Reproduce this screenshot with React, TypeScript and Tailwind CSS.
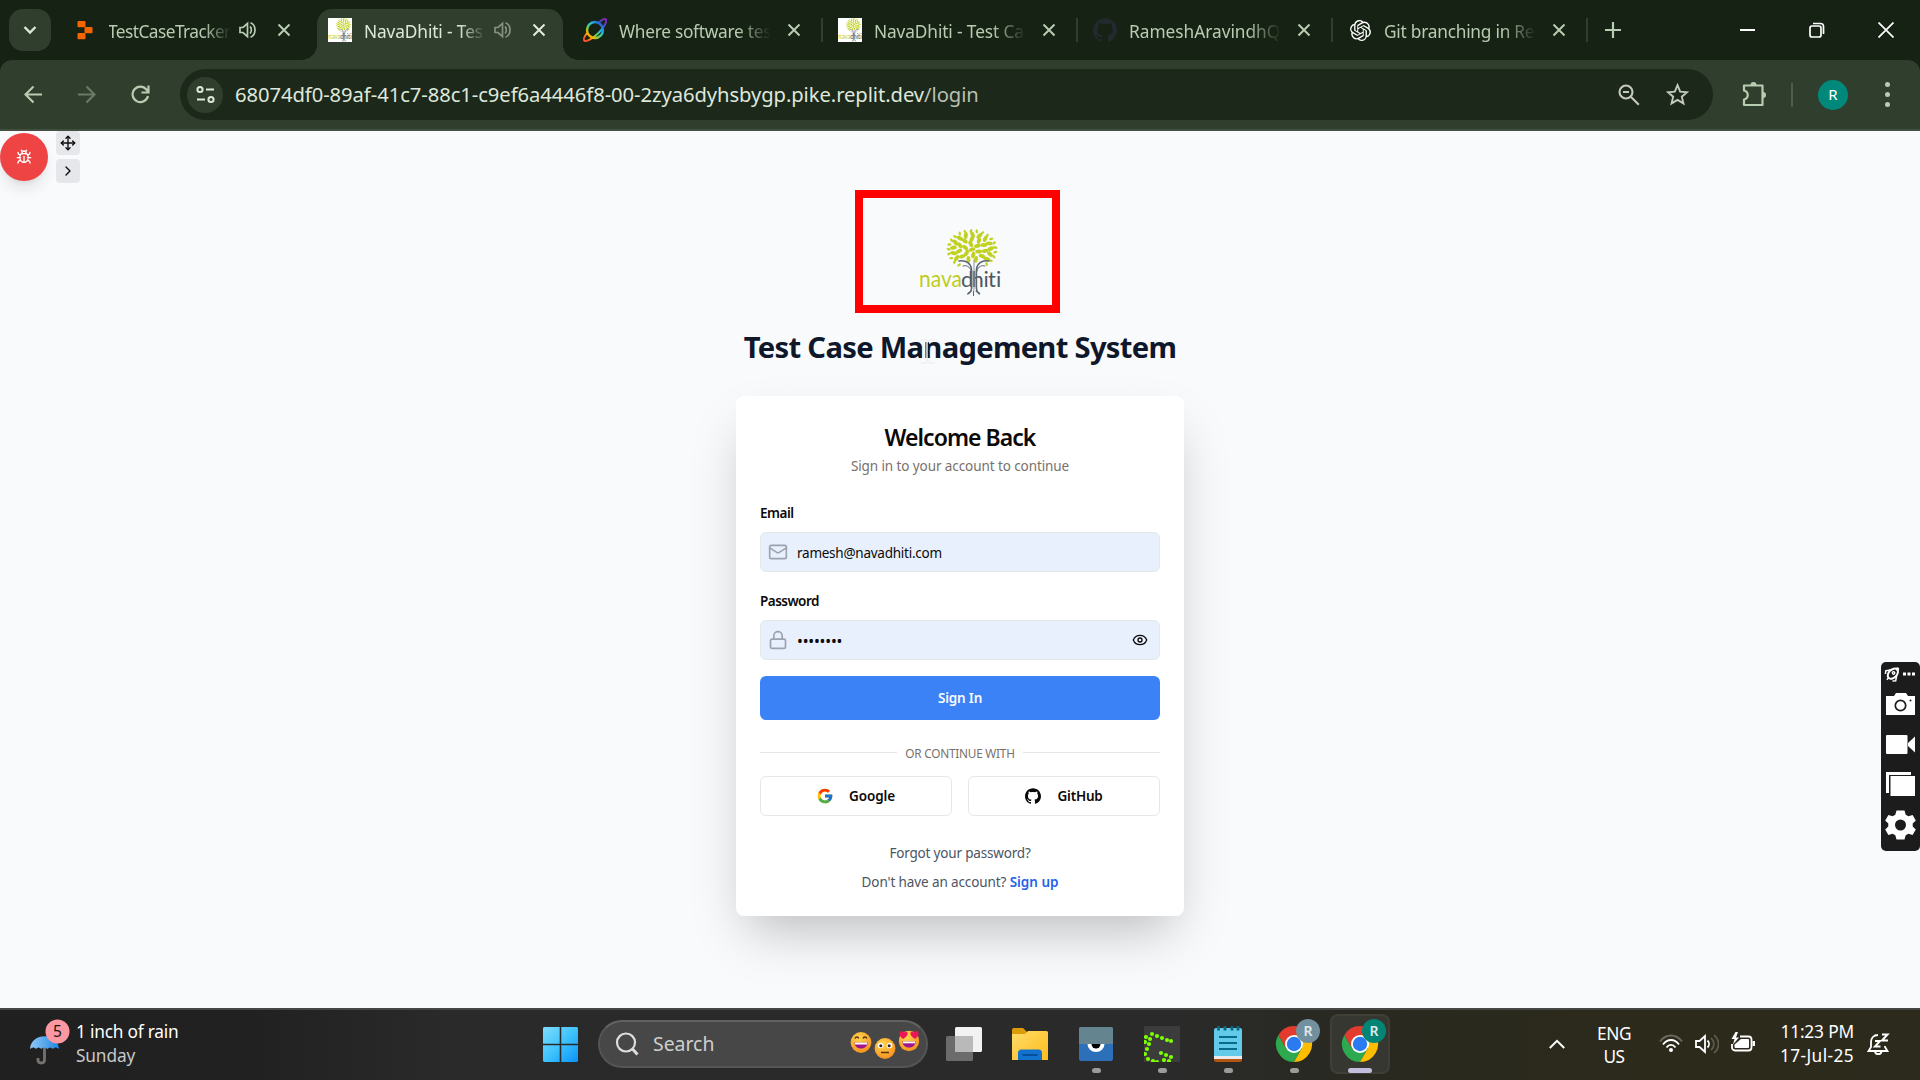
import type { ReactNode } from "react";
import { Bug, ChevronRight, Eye, Lock, Mail, Move } from "lucide-react";
import { FcGoogle } from "react-icons/fc";
import { SiGithub, SiOpenai } from "react-icons/si";

const leaves = [
  { count: 1, r: 0 },
  { count: 6, r: 0.3 },
  { count: 11, r: 0.56 },
  { count: 17, r: 0.8 },
  { count: 25, r: 1 },
].flatMap(({ count, r }, ring) =>
  Array.from({ length: count }, (_, i) => {
    const a = (i / count) * Math.PI * 2 + ring * 0.35;
    return {
      x: 972 + Math.cos(a) * 23.5 * r,
      y: 249.5 + Math.sin(a) * 18.5 * r,
      rot: (a * 180) / Math.PI + (i % 2 ? 25 : -20),
      size: r > 0.9 ? 2.1 : 3.4,
    };
  }).filter((l) => !(Math.abs(l.x - 972) < 11 && l.y > 260)),
);

function TreeLogo({ className, viewBox, stretch }: { className: string; viewBox: string; stretch?: boolean }) {
  return (
    <svg className={className} viewBox={viewBox} preserveAspectRatio={stretch ? "none" : "xMidYMid meet"}>
      {leaves.map((l, i) => (
        <ellipse key={i} cx={l.x} cy={l.y} rx={l.size} ry={l.size * 0.58} fill="#c1d121" transform={`rotate(${l.rot} ${l.x} ${l.y})`} />
      ))}
      <text x="919" y="287.3" fontFamily="Lato, sans-serif" fontSize="22.5" fill="#bccd1f" textLength="43" lengthAdjust="spacingAndGlyphs">nava</text>
      <text x="961 971.500 983.500 988 996" y="287.3" fontFamily="Lato, sans-serif" fontSize="22" fill="#4b5863">dhiti</text>
      <g fill="none" stroke="#5a6672" strokeWidth="1.6" strokeLinecap="round">
        <path d="M959 261c7-1 12.500 2 12.600 10v17c0 4-1 4-3 5.500M989 261c-7-1-12.500 2-12.600 10v17c0 4 1 4 3 5.500" />
        <path d="M963 266c3-1 7 0 8 5M985 266c-3-1-7 0-8 5" strokeWidth="1" />
        <path d="M974 260v30" stroke="#8b949c" strokeWidth="1" />
        <path d="M971 291l-3.500 3M976 291l3.500 3M973.500 291v4.500" strokeWidth="1.100" />
      </g>
    </svg>
  );
}

const NavaFavicon = () => (
  <div className="size-6 bg-white">
    <TreeLogo className="size-6" viewBox="918 229 84 68" stretch />
  </div>
);

const PlanetIcon = () => (
  <svg className="size-6" viewBox="0 0 24 24" fill="none">
    <defs>
      <linearGradient id="rainbow" x1="3" y1="22" x2="21" y2="2" gradientUnits="userSpaceOnUse">
        <stop offset="0" stopColor="#ff4d2e" />
        <stop offset=".22" stopColor="#ffb300" />
        <stop offset=".4" stopColor="#5fd35f" />
        <stop offset=".62" stopColor="#21b8e8" />
        <stop offset=".8" stopColor="#2b62d9" />
        <stop offset="1" stopColor="#7a2bb5" />
      </linearGradient>
    </defs>
    <circle cx="12" cy="12" r="8" stroke="url(#rainbow)" strokeWidth="2.400" />
    <path d="M15.500 5C19 1.300 22 .3 22.900 1.400c1.500 1.900-2 8.300-7.400 13.600S3.200 24 1.400 22.600C.2 21.500 1 19 4 15" stroke="url(#rainbow)" strokeWidth="2" />
  </svg>
);

const ReplitIcon = () => (
  <svg className="size-6" viewBox="0 0 24 24" fill="#f56600">
    <rect x="4.500" y="3" width="8" height="6.200" rx="1" />
    <rect x="11.500" y="9" width="8" height="6.200" rx="1" />
    <rect x="4.500" y="15" width="8" height="6.200" rx="1" />
  </svg>
);

const Speaker = ({ className }: { className: string }) => (
  <svg className={className} viewBox="0 0 18 18" fill="none" stroke="currentColor" strokeWidth="1.700">
    <path d="M1 6.500v5h3l4.500 4V2.500l-4.500 4z" />
    <path d="M11 5.500c1.800 1.500 1.800 5.500 0 7M11.500 1.800c6 2.200 6 12.200 0 14.400" />
  </svg>
);

const Cross = ({ className }: { className: string }) => (
  <svg className={className} viewBox="0 0 14 14" stroke="currentColor" strokeWidth="2">
    <path d="M1.500 1.500l11 11M12.500 1.500l-11 11" />
  </svg>
);

function Tab({ icon, title, active, audio, divider }: { icon: ReactNode; title: ReactNode; active?: boolean; audio?: boolean; divider?: boolean }) {
  return (
    <div className="relative flex h-[60px] w-[255px] shrink-0 items-center pl-[15px]">
      {active && (
        <div className="absolute top-[9px] right-[5px] bottom-0 left-1 rounded-t-[15px] bg-[#303e2d]">
          <div className="absolute bottom-0 -left-[15px] size-[15px] bg-[radial-gradient(circle_at_0_0,transparent_14.5px,#303e2d_15px)]" />
          <div className="absolute -right-[15px] bottom-0 size-[15px] bg-[radial-gradient(circle_at_100%_0,transparent_14.5px,#303e2d_15px)]" />
        </div>
      )}
      <div className="relative flex w-[36px] shrink-0">{icon}</div>
      <div
        className={`relative mt-[3px] shrink-0 text-[17.3px] leading-6 whitespace-nowrap [mask-image:linear-gradient(to_right,black_78%,transparent)] ${audio ? "w-[122px]" : "w-[152px]"} ${active ? "text-[#dde8d8]" : "text-[#b8ccb1]"}`}
      >
        {title}
      </div>
      {audio && <Speaker className={`relative ml-[8px] size-[18px] ${active ? "text-[#869081]" : "text-[#b8ccb1]"}`} />}
      <div className={`relative ${audio ? "ml-[20px]" : "ml-[16px]"}`}>
        <Cross className={`size-[14px] ${active ? "text-[#e3ecdf]" : "text-[#b8ccb1]"}`} />
      </div>
      {divider && <div className="absolute top-[18px] right-0 h-6 w-[2px] bg-[#303e2d]" />}
    </div>
  );
}

function BrowserChrome() {
  return (
    <header className="bg-[#162214] text-[#b8ccb1]">
      <div className="flex h-[60px] items-center">
        <div className="ml-[9px] flex size-[42px] items-center justify-center rounded-[14px] bg-[#303e2d]">
          <svg className="size-[14px]" viewBox="0 0 14 14" fill="none" stroke="#dde8d8" strokeWidth="2.400">
            <path d="M1.500 4l5.500 5.500L12.500 4" />
          </svg>
        </div>
        <div className="ml-[7px] flex">
          <Tab icon={<ReplitIcon />} title={<span className="-ml-px tracking-[-0.55px]">TestCaseTracker</span>} audio />
          <Tab icon={<NavaFavicon />} title={<span className="tracking-[-0.12px]">NavaDhiti - Tes</span>} audio active />
          <Tab icon={<PlanetIcon />} title={<span className="tracking-[-0.27px]">Where software tes</span>} divider />
          <Tab icon={<NavaFavicon />} title={<span className="tracking-[-0.12px]">NavaDhiti - Test Ca</span>} divider />
          <Tab icon={<SiGithub className="size-6 text-[#24292f]" />} title={<span className="tracking-[-0.02px]">RameshAravindhQ</span>} divider />
          <Tab icon={<SiOpenai className="size-[21px] translate-x-[2px] text-white" />} title={<span className="tracking-[-0.24px]">Git branching in Re</span>} divider />
        </div>
        <svg className="ml-[17px] size-4" viewBox="0 0 16 16" stroke="#b8ccb1" strokeWidth="2.200">
          <path d="M8 0v16M0 8h16" />
        </svg>
        <div className="ml-auto flex items-center gap-[53px] pr-[26px]">
          <svg className="size-4" viewBox="0 0 16 16" stroke="#fff" strokeWidth="2">
            <path d="M0 8h15" />
          </svg>
          <svg className="size-4" viewBox="0 0 16 16" fill="none" stroke="#fff" strokeWidth="1.700">
            <rect x="1" y="4" width="11" height="11" rx="2" />
            <path d="M4 1.500h7.500a3 3 0 0 1 3 3V12" />
          </svg>
          <svg className="size-4" viewBox="0 0 16 16" stroke="#fff" strokeWidth="1.700">
            <path d="M.5.5l15 15M15.500.5l-15 15" />
          </svg>
        </div>
      </div>

      <div className="flex h-[71px] items-center rounded-t-[12px] border-b-2 border-[#424e3f] bg-[#303e2d]">
        <div className="ml-6 flex h-full items-center gap-[34px]">
          <svg className="size-[19px]" viewBox="0 0 19 19" fill="none" stroke="#b8ccb1" strokeWidth="2.200">
            <path d="M18 9.500H2M9.500 1.500l-8 8 8 8" />
          </svg>
          <svg className="size-[19px]" viewBox="0 0 19 19" fill="none" stroke="#6b7a66" strokeWidth="2.200">
            <path d="M1 9.500h16M9.500 1.500l8 8-8 8" />
          </svg>
          <svg className="ml-px size-[19px]" viewBox="0 0 19 19" fill="none" stroke="#b8ccb1" strokeWidth="2.200">
            <path d="M17 11a7.800 7.800 0 1 1-1.500-6.500L17 6.500M17.500.5v7h-7" />
          </svg>
        </div>
        <div className="ml-[30px] flex h-[51px] w-[1533px] items-center rounded-full bg-[#1c281a] pr-[24px] pl-[7px]">
          <div className="flex size-9 items-center justify-center rounded-full bg-[#303e2d]">
            <svg className="size-[19px]" viewBox="0 0 19 19" fill="none" stroke="#dde8d8" strokeWidth="2">
              <circle cx="4" cy="4.500" r="2.600" />
              <path d="M10 4.500h8M1 14.500h8" />
              <circle cx="15" cy="14.500" r="2.600" />
            </svg>
          </div>
          <div className="mb-[2px] ml-[12px] text-[20.2px] leading-7 tracking-[-0.06px] whitespace-nowrap text-[#dfe7dc]">
            68074df0-89af-41c7-88c1-c9ef6a4446f8-00-2zya6dyhsbygp.pike.replit.dev<span className="text-[#b9bfb4]">/login</span>
          </div>
          <div className="ml-auto flex items-center gap-[26px]">
            <svg className="size-[22px]" viewBox="0 0 22 22" fill="none" stroke="#c4c9c0" strokeWidth="2.100">
              <circle cx="8" cy="8" r="6.500" />
              <path d="M5 8h6M12.800 12.800l8 8" />
            </svg>
            <svg className="size-[23px]" viewBox="0 0 24 24" fill="none" stroke="#c4c9c0" strokeWidth="2">
              <path d="M12 2.300l2.800 6.700 7.200.6-5.500 4.700 1.700 7-6.200-3.700-6.200 3.700 1.700-7L2 9.600 9.200 9z" />
            </svg>
          </div>
        </div>
        <svg className="mb-px ml-[28px] size-[26px]" viewBox="0 0 26 26" fill="none" stroke="#b8ccb1" strokeWidth="2.200">
          <path d="M3 4.500h18.500v19.500H3v-5.500c5-1.500 5-7.500 0-9z" strokeLinejoin="round" />
          <path d="M9.500 4a3 3 0 0 1 6 0zM22 11a3 3 0 0 1 0 6z" fill="#b8ccb1" stroke="none" />
        </svg>
        <div className="ml-[24px] h-6 w-[2px] bg-[#4c5f47]" />
        <div className="ml-[25px] flex size-[30px] items-center justify-center rounded-full bg-[#00897b] text-[15px] text-white">R</div>
        <div className="ml-[37px] flex flex-col gap-[5px]">
          <div className="size-[5px] rounded-full bg-[#b8ccb1]" />
          <div className="size-[5px] rounded-full bg-[#b8ccb1]" />
          <div className="size-[5px] rounded-full bg-[#b8ccb1]" />
        </div>
      </div>
    </header>
  );
}

function LoginCard() {
  return (
    <div className="mt-[31px] flex h-[520px] w-[448px] flex-col rounded-lg bg-white px-6 pt-[25px] text-[13.5px] leading-5 text-[#0c0a09] shadow-2xl">
      <h2 className="text-center text-[23px] leading-8 font-semibold tracking-[-0.96px]">Welcome Back</h2>
      <p className="mt-[3px] text-center tracking-[-0.09px] text-[#78716c]">Sign in to your account to continue</p>

      <label className="mt-[27px] font-semibold tracking-[-0.49px]">Email</label>
      <div className="mt-[9px] flex h-10 items-center rounded-md border border-[#e5e7eb] bg-[#e8f0fe] pl-[7px]">
        <Mail className="size-5 text-[#9ca3af]" />
        <span className="mt-px ml-[9px] tracking-[-0.25px]">ramesh@navadhiti.com</span>
      </div>

      <label className="mt-[19px] font-semibold tracking-[-0.52px]">Password</label>
      <div className="mt-[9px] flex h-10 items-center rounded-md border border-[#e5e7eb] bg-[#e8f0fe] pr-[11px] pl-[7px]">
        <Lock className="size-5 text-[#9ca3af]" />
        <span className="mt-px ml-[9px] text-[15.5px] tracking-[-0.18px]">••••••••</span>
        <Eye className="ml-auto size-4" />
      </div>

      <button className="mt-4 h-11 rounded-md bg-[#3b82f6] font-semibold tracking-[-0.17px] text-[#f8fafc]">Sign In</button>

      <div className="mt-6 flex items-center gap-2">
        <div className="h-px flex-1 bg-[#e5e5e5]" />
        <span className="translate-y-px text-[11.8px] leading-4 tracking-[-0.23px] text-[#78716c]">OR CONTINUE WITH</span>
        <div className="h-px flex-1 bg-[#e5e5e5]" />
      </div>

      <div className="mt-4 grid grid-cols-2 gap-4">
        <button className="flex h-10 items-center justify-center gap-4 rounded-md border border-[#e5e7eb] font-semibold tracking-[-0.1px]">
          <FcGoogle className="size-4 scale-110" />
          Google
        </button>
        <button className="flex h-10 items-center justify-center gap-4 rounded-md border border-[#e5e7eb] font-semibold tracking-[-0.22px]">
          <SiGithub className="size-4" />
          GitHub
        </button>
      </div>

      <p className="mt-[27px] text-center tracking-[-0.18px] text-[#4b5563]">Forgot your password?</p>
      <p className="mt-[9px] text-center tracking-[-0.11px] text-[#4b5563]">
        Don't have an account? <span className="font-semibold tracking-[-0.02px] text-[#2563eb]">Sign up</span>
      </p>
    </div>
  );
}

function CaptureToolbar() {
  return (
    <div className="absolute top-[531px] right-0 flex h-[189px] w-[39px] flex-col items-center rounded-[5px] bg-[#1c1c1c]">
      <svg className="h-full w-full" viewBox="0 0 39 189" fill="#fff">
        <g fill="none" stroke="#fff" transform="rotate(45 11.500 12)">
          <ellipse cx="11.500" cy="11.500" rx="4" ry="6" strokeWidth="2" />
          <path d="M7.500 10l-3 4.500 2 2.500M15.500 10l3 4.500-2 2.500M11.500 17v3" strokeWidth="1.500" />
          <circle cx="11.500" cy="10.500" r="1.200" strokeWidth="1.400" />
          <circle cx="11.500" cy="5" r="1.200" fill="#fff" />
        </g>
        <path d="M22 10.500h3v3h-3zM26.500 10.500h3v3h-3zM31 10.500h3v3h-3z" />
        <path d="M5 34h8l2-3h10l2 3h7v19H5z" />
        <circle cx="19.500" cy="43.500" r="5.200" fill="none" stroke="#1c1c1c" strokeWidth="1.700" />
        <circle cx="29.500" cy="38.500" r="1" fill="#1c1c1c" />
        <rect x="5" y="73" width="21.500" height="19" rx="1" />
        <path d="M27 81l7-6.500v16L27 84z" />
        <path d="M5 110h25v3H8v18H5z" />
        <rect x="9.500" y="114" width="24.500" height="20" />
        <path strokeLinejoin="round" fillRule="evenodd" transform="translate(0 -1)" d="M15.500 149.500h8l1.200 4.300 2.700 1.500 4.200-1.200 3.200 5.400-3.100 3v3l3.100 3-3.200 5.400-4.200-1.200-2.700 1.500-1.200 4.300h-8l-1.200-4.300-2.700-1.500-4.200 1.200-3.200-5.400 3.100-3v-3l-3.100-3 3.200-5.400 4.200 1.200 2.700-1.500zM19.500 158.500a5.500 5.500 0 1 0 0 11 5.500 5.500 0 0 0 0-11z" />
      </svg>
    </div>
  );
}

function Page() {
  return (
    <main className="relative flex h-[877px] flex-col items-center bg-[#f9fafc]">
      <div className="absolute top-0 left-0 flex gap-2">
        <div className="mt-[2px] flex size-12 items-center justify-center rounded-full bg-[#ef4444] text-white shadow-lg">
          <Bug className="size-4" />
        </div>
        <div className="flex flex-col gap-1 text-[#0c0a09]">
          <div className="flex size-6 items-center justify-center rounded bg-[#e5e7eb]">
            <Move className="size-4" />
          </div>
          <div className="flex size-6 items-center justify-center rounded bg-[#e5e7eb]">
            <ChevronRight className="size-4" />
          </div>
        </div>
      </div>

      <div className="mt-[59px] mr-[5px] h-[123px] w-[205px] border-8 border-[#ff0000]">
        <TreeLogo className="h-[107px] w-[189px]" viewBox="863 198 189 107" />
      </div>
      <h1 className="relative mt-4 text-[29.2px] leading-9 font-bold tracking-[-0.7px] text-[#0f172a]">
        Test Case Management System
        <svg className="absolute top-[10px] left-[177px] h-[25px] w-[14px]" viewBox="0 0 14 25" fill="none" stroke="#eef0f2" strokeWidth="1.500">
          <path d="M0 1h5l2 1.500L9 1h5M0 24h5l2-1.500L9 24h5M6 2.500v20" />
        </svg>
      </h1>
      <LoginCard />
      <CaptureToolbar />
    </main>
  );
}

function ChromeApp({ badge }: { badge: string }) {
  return (
    <svg className="h-11 w-12" viewBox="0 0 48 44">
      <g transform="translate(21 26)">
        <path d="M-15.600-9A18 18 0 0 1 15.600-9L0-9z" fill="#e33b2e" />
        <path d="M-15.600-9A18 18 0 0 0 0 18L7.800 4.500-7.800 4.500z" fill="#2da94f" />
        <path d="M15.600-9A18 18 0 0 1 0 18L7.800 4.500 0-9z" fill="#fdbd00" />
        <path d="M-15.600-9L-7.800 4.500 0 0V-9z" fill="#e33b2e" />
        <circle r="9" fill="#fff" />
        <circle r="7.200" fill="#2a7af0" />
      </g>
      <circle cx="35" cy="13" r="12" fill={badge} />
      <text x="35" y="18.200" textAnchor="middle" fontSize="14" fontWeight="600" fill="#dfe9ea" fontFamily="Noto Sans, sans-serif">R</text>
    </svg>
  );
}

function TaskItem({ children, running, active }: { children: ReactNode; running?: boolean; active?: boolean }) {
  return (
    <div className={`relative mx-[3px] flex size-[60px] items-center justify-center rounded-lg ${active ? "border-2 border-[#3f3f38] bg-[#373731]" : ""}`}>
      {children}
      {running && <div className={`absolute h-[5px] rounded-full ${active ? "bottom-[-1px] w-6 bg-[#c3bede]" : "bottom-[1px] w-[9px] bg-[#9b9b9b]"}`} />}
    </div>
  );
}

function SearchEmoji() {
  return (
    <svg className="h-[30px] w-[70px]" viewBox="0 0 70 30">
      <defs>
        <radialGradient id="face" cx=".4" cy=".3" r=".8">
          <stop offset="0" stopColor="#ffd54a" />
          <stop offset="1" stopColor="#f58a1f" />
        </radialGradient>
      </defs>
      <circle cx="11" cy="13.500" r="10.400" fill="url(#face)" />
      <path d="M5 9.500c.8-2 3-2 3.800 0M13 9.500c.8-2 3-2 3.800 0" stroke="#5b3014" strokeWidth="1.500" fill="none" />
      <path d="M4.500 13.500h13c0 8-13 8-13 0z" fill="#a0148c" />
      <path d="M5 13.500h12v2H5z" fill="#fff" />
      <circle cx="35" cy="19.500" r="10.400" fill="url(#face)" />
      <circle cx="30.500" cy="16.500" r="2.800" fill="#fff" />
      <circle cx="39.500" cy="16.500" r="2.800" fill="#fff" />
      <circle cx="30.800" cy="16.800" r="1.500" fill="#3b2412" />
      <circle cx="39.200" cy="16.800" r="1.500" fill="#3b2412" />
      <path d="M31 23.500h8" stroke="#5b3014" strokeWidth="1.500" />
      <circle cx="59" cy="12" r="10.200" fill="url(#face)" />
      <path d="M4.500 13.500h13c0 8-13 8-13 0z" fill="#a0148c" transform="translate(48 -1)" />
      <path d="M53 12.500h12v1.800H53z" fill="#fff" />
      <path d="M50 3c2-2 3.500-1 4.200.6C55.500 2 58 2.500 57.600 5c-.3 2-2.600 3.800-4.600 5-2-1.500-4.500-4.500-3-7zM60.500 5c-.4-2.500 2-3 3.300-1.400C64.500 2 66.500 1 68.200 3c1.500 2.500-1 5.500-3.200 7-2-1.200-4.200-3-4.500-5z" fill="#ec1558" />
    </svg>
  );
}

const gDots = [[8, 8], [13, 10], [18, 12], [23, 14], [27, 15], [6, 13], [2, 11], [5, 18], [1, 16], [3, 23], [1, 28], [4, 33], [9, 35], [13, 36], [17, 27], [22, 29], [27, 31], [20, 34], [25, 35]];

function Taskbar() {
  return (
    <footer className="flex h-[72px] items-stretch border-t-2 border-[#464644] bg-[linear-gradient(to_right,#202020_0px,#212121_250px,#2a2a2a_450px,#2a2a2b_1150px,#29291f_1400px,#2c2a1b_1650px,#2c2a1c_1920px)] pb-[2px] text-[17.3px] leading-6 text-white">
      <div className="flex w-[543px] items-center">
        <svg className="mb-[4px] ml-[28px] h-[46px] w-[42px]" viewBox="0 0 42 46">
          <defs>
            <linearGradient id="canopy" x1="0" x2="1">
              <stop offset="0" stopColor="#8fc9f8" />
              <stop offset="1" stopColor="#2385e2" />
            </linearGradient>
          </defs>
          <path d="M16.500 28v13c0 4-6.500 4-6.500 0v-2" stroke="#77716f" strokeWidth="2.800" fill="none" />
          <path d="M2 30C3 13 30 13 31 30c-2-2-4.500-2-6 0-2-2-4-2-5.500 0-2-2-4.500-2-6 0-2-2-4-2-5.500 0-1.500-2-4-2-6 0z" fill="url(#canopy)" />
          <circle cx="29.500" cy="12.500" r="12" fill="#fc98a2" />
          <text x="29.500" y="18" textAnchor="middle" fontSize="15.500" fill="#151515" fontFamily="Noto Sans, sans-serif">5</text>
        </svg>
        <div className="ml-[6px]">
          <div className="tracking-[-0.21px]">1 inch of rain</div>
          <div className="tracking-[-0.15px] text-[#c7c7c7]">Sunday</div>
        </div>
      </div>

      <div className="flex items-center">
        <svg className="size-[35px]" viewBox="0 0 35 35">
          <defs>
            <linearGradient id="win" x1="0" y1="0" x2="1" y2="1">
              <stop offset="0" stopColor="#7fdcfd" />
              <stop offset=".5" stopColor="#3fc3fb" />
              <stop offset="1" stopColor="#0a92f8" />
            </linearGradient>
          </defs>
          <path d="M1 0h15.700v16.700H0V1zM18.300 0H34l1 1v15.700H18.300zM0 18.300h16.700V35H1l-1-1zM18.300 18.300H35V34l-1 1H18.300z" fill="url(#win)" />
        </svg>
        <div className="ml-5 flex h-12 w-[330px] items-center rounded-full border-2 border-[#555] border-t-[#626262] bg-[#474747] pr-[6px] pl-[15px]">
          <svg className="size-[24px]" viewBox="0 0 24 24" fill="none" stroke="#dedede" strokeWidth="2.200">
            <circle cx="11" cy="10.500" r="9" />
            <path d="M17.500 17l5 5.500" strokeWidth="3" />
          </svg>
          <span className="ml-[14px] text-[19.4px] text-[#cfcfcf]">Search</span>
          <div className="ml-auto">
            <SearchEmoji />
          </div>
        </div>

        <div className="ml-[3px] flex">
          <TaskItem>
            <svg className="size-9" viewBox="0 0 36 36">
              <rect x="9" y="1" width="27" height="25" rx="1.500" fill="#f2f2f2" />
              <rect x="0" y="10" width="27" height="25" rx="1.500" fill="#6b6b6b" />
              <path d="M9 10h18v16H9z" fill="#b9b9b9" />
            </svg>
          </TaskItem>
          <TaskItem>
            <svg className="size-9" viewBox="0 0 36 36">
              <defs>
                <linearGradient id="folder" x1="0" y1="0" x2="1" y2="1">
                  <stop offset="0" stopColor="#ffdc6a" />
                  <stop offset="1" stopColor="#fcbc1c" />
                </linearGradient>
              </defs>
              <path d="M0 3.500Q0 2 1.500 2H11l4 4v6H0z" fill="#dd9b0a" />
              <path d="M0 8h13l3-3h18.500Q36 5 36 6.500V34H0z" fill="url(#folder)" />
              <path d="M6 34V27q0-3.500 3.500-3.500h17Q30 23.500 30 27v7z" fill="#1273cf" />
              <path d="M10.500 29h15" stroke="#0a4a92" strokeWidth="1.800" />
            </svg>
          </TaskItem>
          <TaskItem running>
            <svg className="size-9" viewBox="0 0 36 36">
              <rect x="1" y="1" width="34" height="34" rx="2" fill="#2d70ba" />
              <path d="M1 3q0-2 2-2h30q2 0 2 2v15H1z" fill="#648490" />
              <path d="M9.500 18a8.500 8 0 0 0 17 0z" fill="#fff" />
              <path d="M13.500 18a4.500 4.500 0 0 0 9 0z" fill="#000" />
            </svg>
          </TaskItem>
          <TaskItem running>
            <svg className="size-9" viewBox="0 0 36 36">
              <rect width="36" height="36" fill="#3c3c3c" />
              {gDots.map(([x, y]) => (
                <circle key={`${x}-${y}`} cx={x} cy={y} r="2.100" fill="#7dff00" />
              ))}
            </svg>
          </TaskItem>
          <TaskItem running>
            <svg className="size-9" viewBox="0 0 36 36">
              <path d="M4 29h28v5q0 2-2 2H6q-2 0-2-2z" fill="#b4560f" />
              <path d="M4 29h28v4H4z" fill="#e9e9ee" />
              <path d="M4 4q0-2 2-2h24q2 0 2 2v26H4z" fill="#62cbea" />
              <path d="M9 11h18M9 17h18M9 23h18" stroke="#0a6a8d" strokeWidth="1.800" />
              <path d="M8.500 0v4.500M15 0v4.500M22 0v4.500M28 0v4.500" stroke="#0f6683" strokeWidth="2.800" />
            </svg>
          </TaskItem>
          <TaskItem running>
            <div className="mb-[8px] ml-[6px]">
              <ChromeApp badge="#72909e" />
            </div>
          </TaskItem>
          <TaskItem running active>
            <div className="mb-[8px] ml-[6px]">
              <ChromeApp badge="#038575" />
            </div>
          </TaskItem>
        </div>
      </div>

      <div className="ml-auto flex items-center pr-[30px]">
        <svg className="size-4" viewBox="0 0 16 16" fill="none" stroke="#fff" strokeWidth="2">
          <path d="M.8 12L8 4.800 15.200 12" />
        </svg>
        <div className="ml-8 w-[34px] text-center">
          <div className="pt-[3px] leading-[22px] tracking-[-0.43px]">ENG</div>
          <div className="leading-[23px] tracking-[-0.55px]">US</div>
        </div>
        <svg className="ml-7 h-5 w-6" viewBox="0 0 24 20" fill="none" stroke="#fff" strokeWidth="1.800">
          <path d="M1 7.500C7-.5 17-.5 23 7.500" stroke="#6a695c" />
          <path d="M4 10.500c4.500-6 11.500-6 16 0M7.500 13.500c2.500-3.500 6.500-3.500 9 0" />
          <circle cx="12" cy="16" r="2" fill="#fff" stroke="none" />
        </svg>
        <svg className="ml-3 h-[22px] w-6" viewBox="0 0 24 22" fill="none" stroke="#fff" strokeWidth="1.800">
          <path d="M1 8v6h3.500l5.500 5V3L4.500 8z" />
          <path d="M12.500 7.500c2 2 2 5 0 7" />
          <path d="M16 5c4 3.500 4 8.500 0 12M19 2c6 5 6 13 0 18" stroke="#5b5a4c" />
        </svg>
        <svg className="mb-[3px] ml-3 h-[22px] w-6" viewBox="0 0 24 22" fill="none" stroke="#fff" strokeWidth="1.800">
          <path d="M9 4.500h8.500a3 3 0 0 1 3 3v8a3 3 0 0 1-3 3H4a3 3 0 0 1-3-3V12" />
          <path d="M10 7h7a1 1 0 0 1 1 1v7a1 1 0 0 1-1 1H4.500a1 1 0 0 1-1-1v-2.500z" fill="#fff" stroke="none" />
          <path d="M21.500 9H24v5h-2.500zM4.500 0L.5 7h3l-1.500 5.500L8 5.500H5L7 0z" fill="#fff" stroke="none" />
        </svg>
        <div className="ml-[25px] w-[74px] text-right whitespace-nowrap">
          <div className="tracking-[-0.15px]">11:23 PM</div>
          <div className="tracking-[0.39px]">17-Jul-25</div>
        </div>
        <svg className="ml-[13px] h-6 w-[23px]" viewBox="0 0 23 24" fill="none" stroke="#fff" strokeWidth="1.800">
          <path d="M11 3C6.500 3 4 6 4 10v5l-2.500 4h19L18 15v-1M8 19.500c.5 3.500 6 3.500 6.500 0" />
          <path d="M8 9h5l-5 5.500h5.500M15 2.500h5.500l-5.500 6h6" strokeWidth="2" />
        </svg>
      </div>
    </footer>
  );
}

export default function App() {
  return (
    <div className="h-[1080px] w-[1920px] overflow-hidden font-['Noto_Sans',sans-serif]">
      <BrowserChrome />
      <Page />
      <Taskbar />
    </div>
  );
}
